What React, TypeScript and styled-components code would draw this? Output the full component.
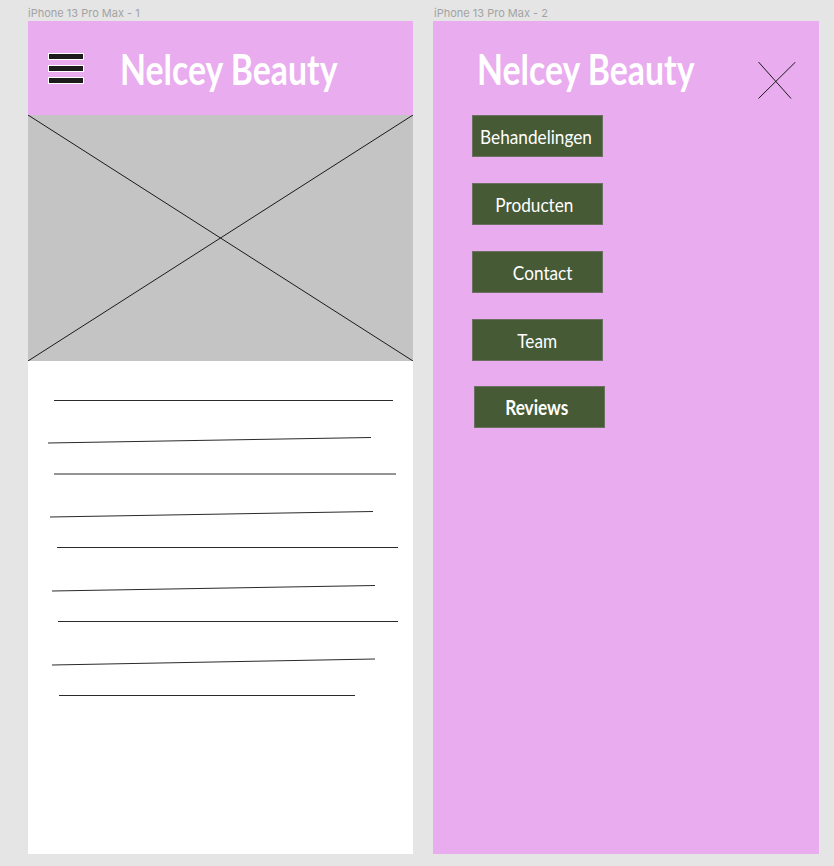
import styled, { createGlobalStyle } from 'styled-components';

const GlobalStyle = createGlobalStyle`
  html, body {
    margin: 0;
    padding: 0;
    background: #e5e5e5;
  }
  body {
    font-family: 'Liberation Sans', Arial, sans-serif;
  }
`;

const PINK = '#e9acef';
const GREEN = '#465a35';

const Canvas = styled.div`
  display: flex;
  align-items: flex-start;
  gap: 20px;
  width: 834px;
  height: 866px;
  padding-left: 28px;
  box-sizing: border-box;
  background: #e5e5e5;
  overflow: hidden;
`;

const FrameColumn = styled.div`
  display: flex;
  flex-direction: column;
`;

const FrameLabel = styled.div<{ $indent?: number }>`
  height: 21px;
  padding-left: ${({ $indent }) => $indent ?? 0}px;
  padding-top: 4px;
  font-family: Inter, 'Liberation Sans', sans-serif;
  font-size: 11px;
  color: #a3a3a3;
  white-space: nowrap;
  box-sizing: border-box;
  display: flex;
  align-items: center;
`;

const Frame = styled.div<{ $width: number; $bg: string }>`
  width: ${({ $width }) => $width}px;
  height: 833px;
  background: ${({ $bg }) => $bg};
  display: flex;
  flex-direction: column;
`;

const Header = styled.header<{ $titleOffset: number }>`
  height: 94px;
  background: ${PINK};
  display: flex;
  align-items: flex-start;
  padding-left: ${({ $titleOffset }) => $titleOffset}px;
  box-sizing: border-box;
  flex-shrink: 0;
`;

const MenuButton = styled.div`
  width: 36px;
  height: 32px;
  margin-top: 32px;
  margin-right: 36px;
  display: flex;
`;

const Title = styled.h1`
  margin: 23px 0 0;
  display: inline-block;
  font-family: Lato, 'Open Sans', sans-serif;
  font-weight: 700;
  font-size: 42px;
  line-height: 50px;
  color: #ffffff;
  white-space: nowrap;
  transform: scaleX(0.805);
  transform-origin: left center;
`;

const CloseButton = styled.div`
  margin-left: auto;
  margin-right: 23px;
  margin-top: 41px;
  width: 38px;
  height: 37px;
  display: flex;
`;

const ImagePlaceholder = styled.div`
  height: 246px;
  background: #c4c4c4;
  flex-shrink: 0;
  display: flex;
`;

const TextSketch = styled.div`
  flex: 1;
  background: #ffffff;
  display: flex;
`;

const Nav = styled.nav`
  display: flex;
  flex-direction: column;
  gap: 26px;
  padding-left: 39px;
`;

const NavButton = styled.div<{ $nudge?: number }>`
  width: 131px;
  height: 42px;
  box-sizing: border-box;
  background: ${GREEN};
  border: 1px solid #6b7160;
  margin-left: ${({ $nudge }) => $nudge ?? 0}px;
  margin-top: ${({ $nudge }) => ($nudge ? -1 : 0)}px;
  display: flex;
  align-items: center;
  justify-content: center;
`;

const NavLabel = styled.span<{ $bold?: boolean; $shift?: number }>`
  display: inline-block;
  font-family: Lato, 'Open Sans', sans-serif;
  font-size: 20px;
  font-weight: ${({ $bold }) => ($bold ? 700 : 400)};
  color: #ffffff;
  white-space: nowrap;
  transform: translateX(${({ $shift }) => $shift ?? 0}px) scaleX(0.86);
`;

const Hamburger = () => (
  <svg width="36" height="32" viewBox="0 0 36 32">
    {[0, 12, 24].map((y) => (
      <rect
        key={y}
        x="0.5"
        y={y + 0.5}
        width="35"
        height="6"
        fill="#1c1c1c"
        stroke="#ffffff"
        strokeWidth="1"
      />
    ))}
  </svg>
);

const CloseIcon = () => (
  <svg width="38" height="37" viewBox="0 0 38 37">
    <line x1="0.5" y1="0" x2="33" y2="36.5" stroke="#1a1a1a" strokeWidth="1" />
    <line x1="37.5" y1="0" x2="0.5" y2="36.5" stroke="#1a1a1a" strokeWidth="1" />
  </svg>
);

const PlaceholderCross = () => (
  <svg width="385" height="246" viewBox="0 0 385 246">
    <line x1="0" y1="0" x2="385" y2="246" stroke="#1a1a1a" strokeWidth="1" />
    <line x1="385" y1="0" x2="0" y2="246" stroke="#1a1a1a" strokeWidth="1" />
  </svg>
);

// sketched text lines, coords relative to the white area
const sketchLines: [number, number, number, number][] = [
  [26, 39.5, 365, 39.5],
  [20, 82, 343, 76.5],
  [26, 113, 368, 113],
  [22, 156, 345, 150.5],
  [29, 186.5, 370, 186.5],
  [24, 230, 347, 224.5],
  [30, 260.5, 370, 260.5],
  [24, 304, 347, 298],
  [31, 334.5, 327, 334.5],
];

const LinesSketch = () => (
  <svg width="385" height="493" viewBox="0 0 385 493">
    {sketchLines.map(([x1, y1, x2, y2], i) => (
      <line key={i} x1={x1} y1={y1} x2={x2} y2={y2} stroke="#2a2a2a" strokeWidth="1" />
    ))}
  </svg>
);

const navItems = [
  { label: 'Behandelingen', shift: -2 },
  { label: 'Producten', shift: -3 },
  { label: 'Contact', shift: 5 },
  { label: 'Team', shift: 0 },
  { label: 'Reviews', shift: -3, bold: true, nudge: 2 },
];

export default function App() {
  return (
    <>
      <GlobalStyle />
      <Canvas>
        <FrameColumn>
          <FrameLabel>iPhone 13 Pro Max - 1</FrameLabel>
          <Frame $width={385} $bg="#ffffff">
            <Header $titleOffset={20}>
              <MenuButton>
                <Hamburger />
              </MenuButton>
              <Title>Nelcey Beauty</Title>
            </Header>
            <ImagePlaceholder>
              <PlaceholderCross />
            </ImagePlaceholder>
            <TextSketch>
              <LinesSketch />
            </TextSketch>
          </Frame>
        </FrameColumn>

        <FrameColumn>
          <FrameLabel $indent={1}>iPhone 13 Pro Max - 2</FrameLabel>
          <Frame $width={386} $bg={PINK}>
            <Header $titleOffset={44}>
              <Title>Nelcey Beauty</Title>
              <CloseButton>
                <CloseIcon />
              </CloseButton>
            </Header>
            <Nav>
              {navItems.map((item) => (
                <NavButton key={item.label} $nudge={item.nudge}>
                  <NavLabel $bold={item.bold} $shift={item.shift}>
                    {item.label}
                  </NavLabel>
                </NavButton>
              ))}
            </Nav>
          </Frame>
        </FrameColumn>
      </Canvas>
    </>
  );
}
